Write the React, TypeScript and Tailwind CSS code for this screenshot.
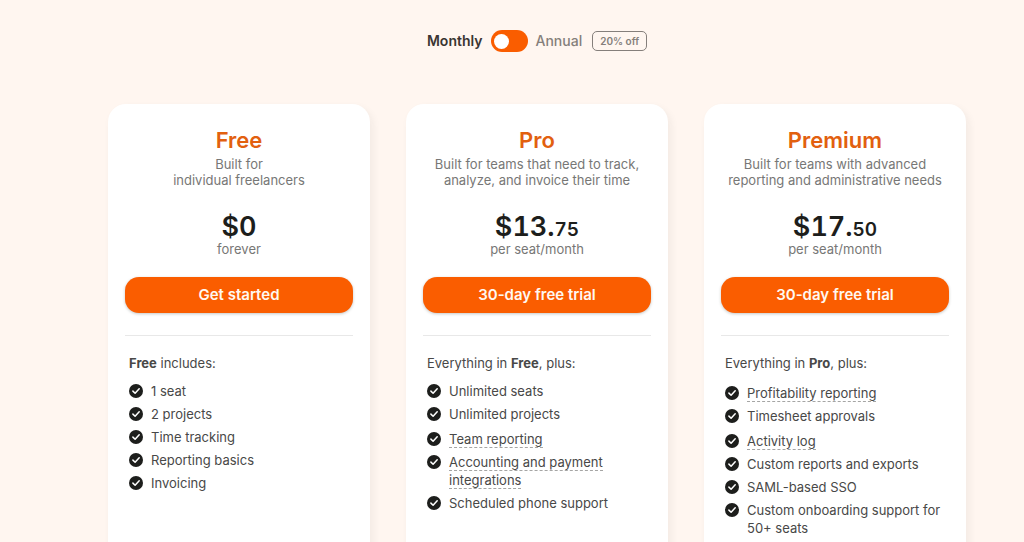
import React, { useState } from "react";

type Feature = { text: string; tip?: boolean; multiline?: boolean };

type Plan = {
  name: string;
  tagline: [string, string];
  whole: string;
  cents?: string;
  period: string;
  cta: string;
  intro: React.ReactNode;
  features: Feature[];
};

const plans: Plan[] = [
  {
    name: "Free",
    tagline: ["Built for", "individual freelancers"],
    whole: "$0",
    period: "forever",
    cta: "Get started",
    intro: (
      <>
        <strong className="font-bold">Free</strong> includes:
      </>
    ),
    features: [
      { text: "1 seat" },
      { text: "2 projects" },
      { text: "Time tracking" },
      { text: "Reporting basics" },
      { text: "Invoicing" },
    ],
  },
  {
    name: "Pro",
    tagline: ["Built for teams that need to track,", "analyze, and invoice their time"],
    whole: "$13.",
    cents: "75",
    period: "per seat/month",
    cta: "30-day free trial",
    intro: (
      <>
        Everything in <strong className="font-bold">Free</strong>, plus:
      </>
    ),
    features: [
      { text: "Unlimited seats" },
      { text: "Unlimited projects" },
      { text: "Team reporting", tip: true },
      { text: "Accounting and payment integrations", tip: true, multiline: true },
      { text: "Scheduled phone support" },
    ],
  },
  {
    name: "Premium",
    tagline: ["Built for teams with advanced", "reporting and administrative needs"],
    whole: "$17.",
    cents: "50",
    period: "per seat/month",
    cta: "30-day free trial",
    intro: (
      <>
        Everything in <strong className="font-bold">Pro</strong>, plus:
      </>
    ),
    features: [
      { text: "Profitability reporting", tip: true },
      { text: "Timesheet approvals" },
      { text: "Activity log", tip: true },
      { text: "Custom reports and exports" },
      { text: "SAML-based SSO" },
      { text: "Custom onboarding support for 50+ seats" },
    ],
  },
];

function CheckBadge() {
  return (
    <svg viewBox="0 0 14 14" className="mt-0.5 h-3.5 w-3.5 shrink-0" aria-hidden="true">
      <circle cx="7" cy="7" r="7" fill="#1d1e1c" />
      <path
        d="M3.9 7.1 6.1 9.3 10.2 4.8"
        fill="none"
        stroke="#fff"
        strokeWidth="1.5"
        strokeLinecap="round"
        strokeLinejoin="round"
      />
    </svg>
  );
}

function FeatureRow({ feature }: { feature: Feature }) {
  return (
    <li className={feature.tip && !feature.multiline ? "flex gap-2 pt-0.5" : "flex gap-2"}>
      <CheckBadge />
      <span className="text-[13px] leading-[18px]">
        {feature.tip ? (
          <span className="border-b border-dashed border-[#a5a5a4]">{feature.text}</span>
        ) : (
          feature.text
        )}
      </span>
    </li>
  );
}

function PlanCard({ plan }: { plan: Plan }) {
  return (
    <section className="rounded-[18px] bg-white px-[17px] pt-5 pb-10 shadow-[3px_4px_8px_rgba(29,30,28,0.06)]">
      <div className="text-center">
        <h2 className="text-[22px] leading-8 font-semibold text-[#e2600f]">{plan.name}</h2>
        <p className="text-[13px] leading-4 text-[#777776]">
          {plan.tagline[0]}
          <br />
          {plan.tagline[1]}
        </p>
        <p className="mt-[25px] text-[27px] leading-7 font-semibold text-[#1d1e1c] tabular-nums">
          {plan.whole}
          {plan.cents && <span className="text-[19px] leading-none">{plan.cents}</span>}
        </p>
        <p className="text-[13px] leading-4 text-[#777776]">{plan.period}</p>
      </div>
      <button
        type="button"
        className="mt-5 h-9 w-full rounded-[14px] bg-[#fa5d00] text-[15px] font-semibold text-[#fff8f1] shadow-[0_1px_3px_rgba(29,30,28,0.25)]"
      >
        {plan.cta}
      </button>
      <hr className="mt-[22px] border-[#e8e8e8]" />
      <div className="px-1 pt-[18px] text-[#484847]">
        <p className="text-[13px] leading-[18px]">{plan.intro}</p>
        <ul className="mt-2.5 flex flex-col gap-[5px]">
          {plan.features.map((feature) => (
            <FeatureRow key={feature.text} feature={feature} />
          ))}
        </ul>
      </div>
    </section>
  );
}

export default function App() {
  const [annual, setAnnual] = useState(false);
  return (
    <main className="min-h-screen bg-[#fff6f0] pr-[58px] pl-[108px] font-['Inter','Liberation_Sans',sans-serif]">
      <div className="flex items-center justify-center pt-[30px] text-[14px] leading-[22px] font-semibold">
        <span className="text-[#3a3532]">Monthly</span>
        <button
          type="button"
          role="switch"
          aria-checked={annual}
          aria-label="Annual billing"
          onClick={() => setAnnual(!annual)}
          className={
            annual
              ? "mx-2 flex h-[22px] w-[37px] items-center justify-end rounded-full bg-[#fa5d00] px-[3px]"
              : "mx-2 flex h-[22px] w-[37px] items-center rounded-full bg-[#fa5d00] px-[3px]"
          }
        >
          <span className="h-[15px] w-[15px] rounded-full bg-white" />
        </button>
        <span className="font-medium text-[#857f7b]">Annual</span>
        <span className="ml-2.5 rounded-[5px] border border-[#857f7b] px-[7px] text-[10px] leading-[18px] text-[#857f7b]">
          20% off
        </span>
      </div>
      <div className="mt-[52px] grid grid-cols-3 gap-9">
        {plans.map((plan) => (
          <PlanCard key={plan.name} plan={plan} />
        ))}
      </div>
    </main>
  );
}
